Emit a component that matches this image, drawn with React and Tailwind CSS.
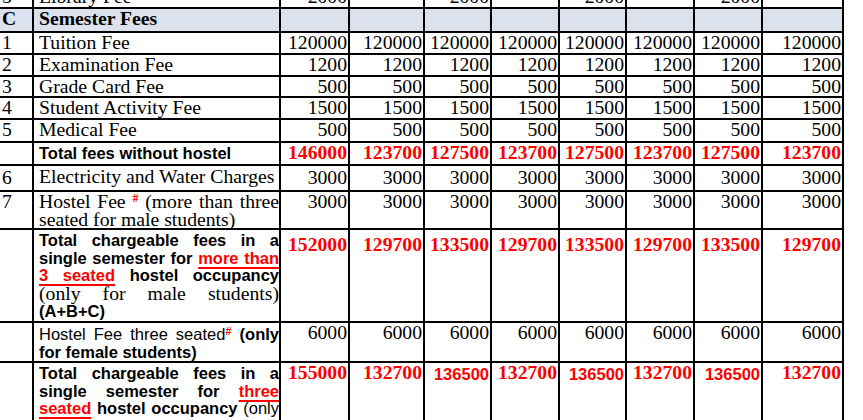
const serif = "font-['Liberation_Serif','Times_New_Roman',serif]"
const sans = "font-['Liberation_Sans',Arial,sans-serif]"

const cols = [34, 247, 69, 75, 67, 68, 67, 68, 68, 81]

const rep = (v) => Array(8).fill(v)

const simpleRows = [
  { no: '1', label: 'Tuition Fee', vals: rep('120000'), h: 'h-[22px]' },
  { no: '2', label: 'Examination Fee', vals: rep('1200'), h: 'h-[22px]' },
  { no: '3', label: 'Grade Card Fee', vals: rep('500'), h: 'h-[21px]' },
  { no: '4', label: 'Student Activity Fee', vals: rep('1500'), h: 'h-[22px]' },
  { no: '5', label: 'Medical Fee', vals: rep('500'), h: 'h-[23px]' },
]

const totalNoHostel = ['146000', '123700', '127500', '123700', '127500', '123700', '127500', '123700']
const totalMale = ['152000', '129700', '133500', '129700', '133500', '129700', '133500', '129700']
const totalFemale = ['155000', '132700', '136500', '132700', '136500', '132700', '136500', '132700']

function Line({ children, last }) {
  return (
    <span className={'block whitespace-nowrap ' + (last ? 'text-left' : 'text-justify [text-align-last:justify]')}>
      {children}
    </span>
  )
}

function Red({ children }) {
  return (
    <span className="text-[#ff0000] underline decoration-[#ff0000] decoration-2 underline-offset-[3px]">{children}</span>
  )
}

const td = 'border-2 border-black align-top p-0'
const numCell = td + ' pl-[2px] pt-[1px] ' + serif + ' text-[19.7px]'
const descCell = td + ' pl-[5px]'
const valCell = td + ' text-right pr-[1px] ' + serif + ' text-[19.7px]'

export default function App() {
  return (
    <div className="w-[863px] h-[420px] overflow-hidden bg-white text-black">
      <table className="table-fixed border-collapse -ml-[2px] -mt-[15px] w-[845px] leading-[17.5px]">
        <colgroup>
          {cols.map((w, i) => (
            <col key={i} style={{ width: w }} />
          ))}
        </colgroup>
        <tbody>
          <tr className="h-[22px]">
            <td className={numCell}>5</td>
            <td className={descCell + ' pt-[1px] ' + serif + ' text-[19.7px]'}>Library Fee</td>
            {['2000', '', '2000', '', '2000', '', '2000', ''].map((v, i) => (
              <td key={i} className={valCell + ' pt-[1px]'}>{v}</td>
            ))}
          </tr>

          <tr className="h-[24px] bg-[#dbe2ee]">
            <td className={numCell + ' font-bold'}>C</td>
            <td className={descCell + ' pt-[1px] font-bold ' + serif + ' text-[19.7px]'}>Semester Fees</td>
            {rep('').map((v, i) => (
              <td key={i} className={valCell}></td>
            ))}
          </tr>

          {simpleRows.map((r) => (
            <tr key={r.no} className={r.h}>
              <td className={numCell}>{r.no}</td>
              <td className={descCell + ' pt-[1px] whitespace-nowrap ' + serif + ' text-[19.7px]'}>{r.label}</td>
              {r.vals.map((v, i) => (
                <td key={i} className={valCell + ' pt-[1px]'}>{v}</td>
              ))}
            </tr>
          ))}

          <tr className="h-[23px]">
            <td className={numCell}></td>
            <td className={descCell + ' pt-[2px] font-bold whitespace-nowrap ' + sans + ' text-[16.5px]'}>Total fees without hostel</td>
            {totalNoHostel.map((v, i) => (
              <td key={i} className={valCell + ' pt-[1px] font-bold text-[#ff0000]'}>{v}</td>
            ))}
          </tr>

          <tr className="h-[26px]">
            <td className={numCell + ' pt-[3px]'}>6</td>
            <td className={descCell + ' pt-[2px] whitespace-nowrap ' + serif + ' text-[19.7px]'}>Electricity and Water Charges</td>
            {rep('3000').map((v, i) => (
              <td key={i} className={valCell + ' pt-[3px]'}>{v}</td>
            ))}
          </tr>

          <tr className="h-[38px]">
            <td className={numCell}>7</td>
            <td className={descCell + ' pt-[1px] ' + serif + ' text-[19.7px]'}>
              <Line>
                Hostel Fee <sup className="text-[#ff0000] text-[12px] font-bold">#</sup> (more than three
              </Line>
              <Line last>seated for male students)</Line>
            </td>
            {rep('3000').map((v, i) => (
              <td key={i} className={valCell + ' pt-[1px]'}>{v}</td>
            ))}
          </tr>

          <tr className="h-[93px]">
            <td className={numCell}></td>
            <td className={descCell + ' pt-[2px] font-bold ' + sans + ' text-[16.5px]'}>
              <Line>Total chargeable fees in a</Line>
              <Line>
                single semester for <Red>more than</Red>
              </Line>
              <Line>
                <Red>3 seated</Red> hostel occupancy
              </Line>
              <Line>
                <span className={'font-normal ' + serif + ' text-[19.7px]'}>(only for male students)</span>
              </Line>
              <Line last>(A+B+C)</Line>
            </td>
            {totalMale.map((v, i) => (
              <td key={i} className={valCell + ' pt-[6px] font-bold text-[#ff0000]'}>{v}</td>
            ))}
          </tr>

          <tr className="h-[39px]">
            <td className={numCell}></td>
            <td className={descCell + ' pt-[3px] ' + sans + ' text-[16.5px]'}>
              <Line>
                Hostel Fee three seated<sup className="text-[#ff0000] text-[11px] font-bold">#</sup>{' '}
                <span className="font-bold">(only</span>
              </Line>
              <Line last>
                <span className="font-bold">for female students)</span>
              </Line>
            </td>
            {rep('6000').map((v, i) => (
              <td key={i} className={valCell + ' pt-[1px]'}>{v}</td>
            ))}
          </tr>

          <tr className="h-[80px]">
            <td className={numCell}></td>
            <td className={descCell + ' pt-[2px] font-bold ' + sans + ' text-[16.5px]'}>
              <Line>Total chargeable fees in a</Line>
              <Line>
                single semester for <Red>three</Red>
              </Line>
              <Line>
                <Red>seated</Red> hostel occupancy <span className="font-normal">(only</span>
              </Line>
              <Line last>
                <span className="font-normal">for</span> female students) (A+B+D)
              </Line>
            </td>
            {totalFemale.map((v, i) => (
              <td
                key={i}
                className={
                  td +
                  ' text-right pr-[1px] pt-[1px] font-bold text-[#ff0000] ' +
                  (v === '136500' ? sans + ' text-[16.5px] pt-[3px]' : serif + ' text-[19.7px]')
                }
              >
                {v}
              </td>
            ))}
          </tr>
        </tbody>
      </table>
    </div>
  )
}
